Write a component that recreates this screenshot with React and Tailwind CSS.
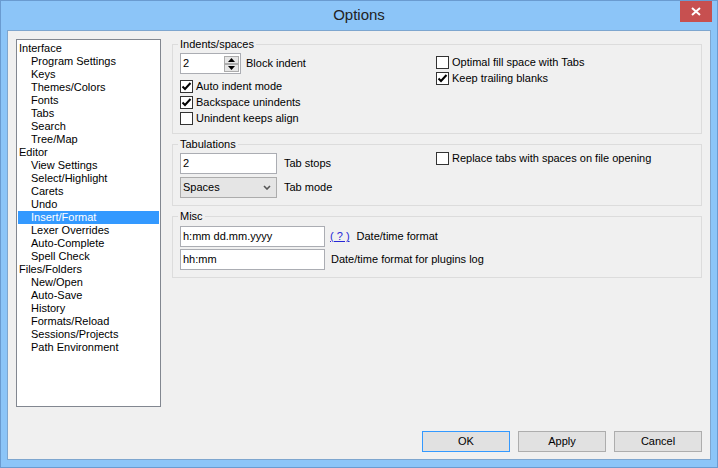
import React from 'react';

const treeItems = [
  ['Interface', 0], ['Program Settings', 1], ['Keys', 1], ['Themes/Colors', 1], ['Fonts', 1],
  ['Tabs', 1], ['Search', 1], ['Tree/Map', 1],
  ['Editor', 0], ['View Settings', 1], ['Select/Highlight', 1], ['Carets', 1], ['Undo', 1],
  ['Insert/Format', 1], ['Lexer Overrides', 1], ['Auto-Complete', 1], ['Spell Check', 1],
  ['Files/Folders', 0], ['New/Open', 1], ['Auto-Save', 1], ['History', 1], ['Formats/Reload', 1],
  ['Sessions/Projects', 1], ['Path Environment', 1],
];

const Check = ({ checked, label }) => (
  <div className="flex items-center gap-[3px] h-4">
    <span className="w-[13px] h-[13px] border border-[#333] bg-white flex items-center justify-center shrink-0">
      {checked && (
        <svg width="11" height="11" viewBox="0 0 11 11">
          <path d="M1.5 5.5 L4 8 L9.5 2" fill="none" stroke="#000" strokeWidth="2" />
        </svg>
      )}
    </span>
    <span>{label}</span>
  </div>
);

const Group = ({ title, children }) => (
  <fieldset className="border border-[#dcdcdc] px-[7px] pb-[7px] min-w-0">
    <legend className="-ml-[2px] px-[2px] leading-[13px]">{title}</legend>
    {children}
  </fieldset>
);

const Edit = ({ value, w }) => (
  <div className={`h-[21px] border border-[#abadb3] bg-white flex items-center pl-[2px] ${w}`}>{value}</div>
);

const Btn = ({ label, focused }) => (
  <button className={`w-[88px] h-[21px] bg-[#e1e1e1] border flex items-center justify-center ${focused ? 'border-[#3399ff]' : 'border-[#adadad]'}`}>
    {label}
  </button>
);

export default function App() {
  return (
    <div className="w-[718px] h-[468px] border border-[#6a9bd0] bg-[#8cc5f8] flex flex-col font-['Liberation_Sans',Arial,sans-serif] text-[11px] text-black">
      {/* Title bar */}
      <div className="relative h-[29px] shrink-0 flex items-center justify-center">
        <span className="text-[15px] text-[#222] font-['Liberation_Sans',sans-serif]">Options</span>
        <button className="absolute right-[5px] top-0 w-[32px] h-[21px] bg-[#c75050] flex items-center justify-center">
          <svg width="10" height="9" viewBox="0 0 10 9">
            <path d="M1 1 L9 8 M9 1 L1 8" stroke="#fff" strokeWidth="2" />
          </svg>
        </button>
      </div>

      {/* Client area */}
      <div className="flex-1 mx-[6px] mb-[7px] border border-[#7ea6cf] bg-[#f0f0f0] flex flex-col">
        <div className="flex items-start pt-[7px]">
          {/* Tree */}
          <div className="ml-[8px] mt-px w-[145px] h-[368px] border border-[#828790] bg-white pt-[2px] overflow-hidden shrink-0">
            {treeItems.map(([t, lvl]) => {
              const sel = t === 'Insert/Format';
              return (
                <div
                  key={t}
                  className={`mx-px h-[13px] leading-[13px] whitespace-nowrap ${lvl ? 'pl-[13px]' : 'pl-px'} ${sel ? 'bg-[#3399ff] text-white' : ''}`}
                >
                  {t}
                </div>
              );
            })}
          </div>

          {/* Options panel */}
          <div className="flex-1 ml-[11px] mr-[8px] flex flex-col gap-[4px]">
            <Group title="Indents/spaces">
              <div className="flex">
                <div className="w-[256px] flex flex-col">
                  <div className="mt-[2px] flex items-center gap-[5px]">
                    <div className="w-[61px] h-[21px] border border-[#abadb3] bg-white flex items-center justify-between pl-[2px] pr-px">
                      <span>2</span>
                      <div className="flex flex-col">
                        <div className="w-[15px] h-[8px] border border-[#acacac] bg-[#e6e6e6] flex items-center justify-center">
                          <svg width="7" height="4" viewBox="0 0 7 4"><path d="M0 4 L3.5 0 L7 4 Z" fill="#000" /></svg>
                        </div>
                        <div className="w-[15px] h-[8px] border border-[#acacac] bg-[#e6e6e6] flex items-center justify-center">
                          <svg width="7" height="4" viewBox="0 0 7 4"><path d="M0 0 L7 0 L3.5 4 Z" fill="#000" /></svg>
                        </div>
                      </div>
                    </div>
                    <span>Block indent</span>
                  </div>
                  <div className="mt-[4px] flex flex-col">
                    <Check checked label="Auto indent mode" />
                    <Check checked label="Backspace unindents" />
                    <Check label="Unindent keeps align" />
                  </div>
                </div>
                <div className="mt-[3px] flex flex-col">
                  <Check label="Optimal fill space with Tabs" />
                  <Check checked label="Keep trailing blanks" />
                </div>
              </div>
            </Group>

            <Group title="Tabulations">
              <div className="flex">
                <div className="w-[256px] flex flex-col gap-[3px] mt-[2px]">
                  <div className="flex items-center gap-[7px]">
                    <Edit value="2" w="w-[97px]" />
                    <span>Tab stops</span>
                  </div>
                  <div className="flex items-center gap-[7px]">
                    <div className="w-[97px] h-[21px] border border-[#acacac] bg-[#e5e5e5] flex items-center justify-between pl-[2px] pr-[5px]">
                      <span>Spaces</span>
                      <svg width="8" height="5" viewBox="0 0 8 5">
                        <path d="M1 1 L4 4 L7 1" fill="none" stroke="#555" strokeWidth="1.6" />
                      </svg>
                    </div>
                    <span>Tab mode</span>
                  </div>
                </div>
                <div className="-mt-px">
                  <Check label="Replace tabs with spaces on file opening" />
                </div>
              </div>
            </Group>

            <Group title="Misc">
              <div className="flex flex-col gap-[2px] mt-[3px]">
                <div className="flex items-center">
                  <Edit value="h:mm dd.mm.yyyy" w="w-[145px]" />
                  <span className="ml-[5px] text-[#2727d6] underline">( ? )</span>
                  <span className="ml-[7px]">Date/time format</span>
                </div>
                <div className="flex items-center gap-[6px]">
                  <Edit value="hh:mm" w="w-[145px]" />
                  <span>Date/time format for plugins log</span>
                </div>
              </div>
            </Group>
          </div>
        </div>

        {/* Buttons */}
        <div className="mt-auto flex justify-end gap-[8px] pr-[8px] pb-[7px]">
          <Btn label="OK" focused />
          <Btn label="Apply" />
          <Btn label="Cancel" />
        </div>
      </div>
    </div>
  );
}
